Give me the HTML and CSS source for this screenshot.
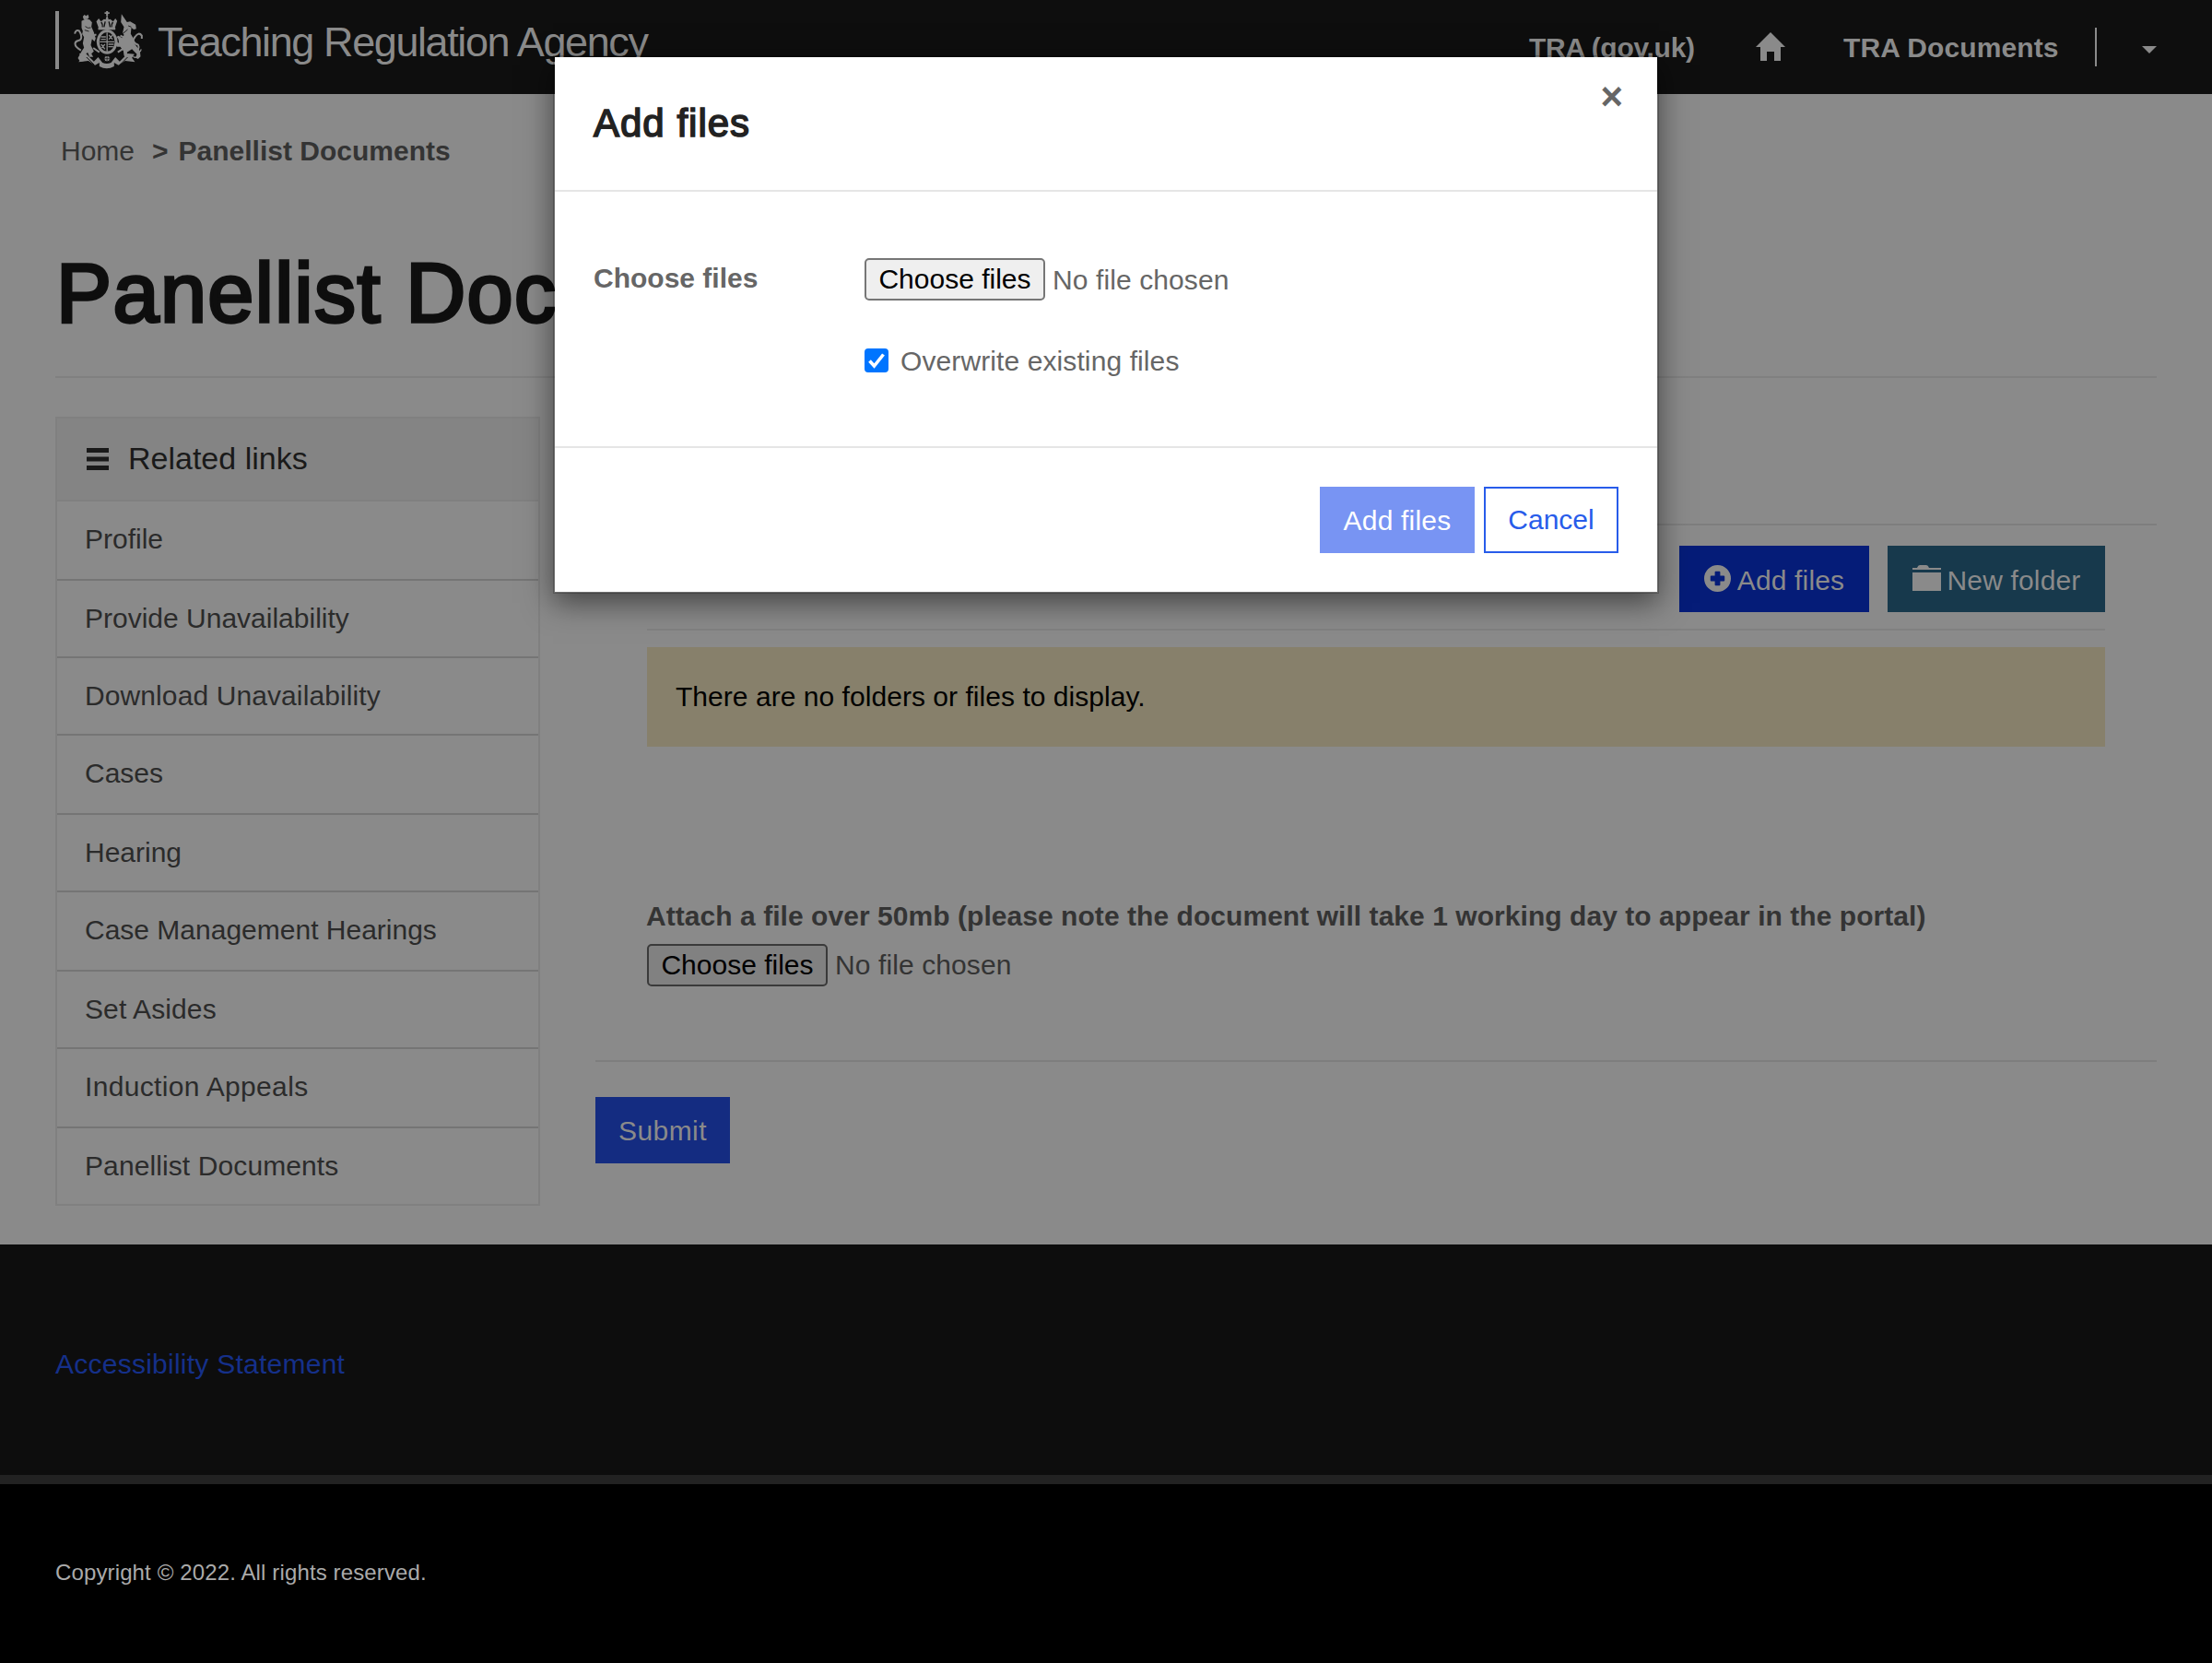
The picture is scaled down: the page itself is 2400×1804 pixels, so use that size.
FILE: index.html
```html
<!DOCTYPE html>
<html lang="en">
<head>
<meta charset="utf-8">
<title>Panellist Documents</title>
<link rel="stylesheet" href="styles.css">
</head>
<body>
<header class="navbar">
  <a class="brand">
    <svg class="crest" viewBox="0 0 230 195" aria-hidden="true">
      <g fill="currentColor">
        <path d="M28 32l12-6 14 2 8 9-2 14 8 18 6 20-4 10-8-8-4 20 10 20-8 8 6 10-12 0-6-14-14 10-4 10 10 6-16 4-8-12 12-22 8-12-4-14 4-20-6-10 2-10-4-10z"/>
        <path d="M32 18l5-6 6 4 6-5 3 9-4 6-13 1z"/>
        <path d="M158 10l18 26 10-2 18 10 2 14-8 2-8-6-2 20 8 14 4 18 18 24 2 18-8 8-8-4 4-12-16-16-16 10 2 14 12 12-14 2-10-18-2-14-10-14-10 0-8-12 4-6 10 6-2-12-6-8 6-4 12 8 6-10-4-8 4-18-10-16z"/>
        <path d="M84 24l7 10 10-8 5 2 5-16 5 16 5-2 10 8 7-10 6 8-8 24H84l-8-22z"/>
        <path d="M108 0h6v4h5v5h-5v7h-6V9h-5V4h5z"/>
        <path d="M82 54h56v7H82z"/>
        <path d="M20 138l22 0 26 26 14-14 14 18q14 6 28 0l14-18 14 14 26-26 22 2-8 12 10 14-32-4-22 14-14-8v12q-24 14-48 0v-12l-14 8-22-14-32 4 12-14z"/>
      </g>
      <g fill="none" stroke="currentColor" stroke-width="6">
        <path d="M26 128C-2 112 6 98 18 96S30 78 20 64Q8 60 6 74"/>
        <path d="M200 130q20-4 12-20-24-10-10-26 12-18 22-4v10"/>
        <path d="M56 84l20-8M66 120l20 14M176 90l-22-10M170 118l-24 16"/>
        <path d="M204 128q16 10 18-4M196 148q10 8 14-4" stroke-width="4"/>
      </g>
      <ellipse cx="111" cy="100" rx="34" ry="40" fill="currentColor"/>
      <ellipse cx="111" cy="100" rx="25" ry="31" fill="#0e0e0e"/>
      <g stroke="currentColor" fill="none" stroke-width="4">
        <path d="M111 70v62M87 100h48M91 84h16M91 92h16M115 108h18M115 116h16M117 78l12 14M129 78l-12 14M92 108l12 16M104 108l-10 12"/>
        <path d="M44 150l24 24M178 150l-24 24" stroke="#0e0e0e" stroke-width="3"/>
        <path d="M92 36q6 8 4 16M130 36q-6 8-4 16M105 34l-4 18M117 34l4 18" stroke="#0e0e0e"/>
        <path d="M40 50q8 8 18 4M38 62l14 4M180 48l10 4M178 60l-14 12" stroke="#0e0e0e" stroke-width="2.5"/>
      </g>
      <circle cx="111" cy="155" r="10" fill="currentColor" stroke="#0e0e0e" stroke-width="3"/>
      <path d="M111 142v26M100 155h22" stroke="#0e0e0e" stroke-width="2"/>
    </svg>
    <span class="brand-name">Teaching Regulation Agency</span>
  </a>
  <nav class="nav">
    <a class="nav-gov">TRA (gov.uk)</a>
    <svg class="home" viewBox="0 0 32 31" aria-hidden="true"><path fill="currentColor" d="M16 0L32 16H27V31H20V21H12V31H5V16H0z"/></svg>
    <a class="nav-docs">TRA Documents</a>
    <span class="nav-divider"></span>
    <svg class="caret" viewBox="0 0 16 8" aria-hidden="true"><path fill="currentColor" d="M0 0H16L8 8z"/></svg>
  </nav>
</header>

<main class="page">
  <div class="breadcrumb"><a>Home</a><b class="sep">&gt;</b><b>Panellist Documents</b></div>
  <h1>Panellist Documents</h1>
  <div class="columns">
    <aside class="related">
      <div class="related-head">
        <svg class="bars" viewBox="0 0 24 24" aria-hidden="true"><path fill="currentColor" d="M0 0h24v5H0zM0 9.500h24v5H0zM0 19h24v5H0z"/></svg>
        <span>Related links</span>
      </div>
      <ul>
        <li>Profile</li>
        <li>Provide Unavailability</li>
        <li class="roomy">Download Unavailability</li>
        <li>Cases</li>
        <li>Hearing</li>
        <li>Case Management Hearings</li>
        <li class="roomy">Set Asides</li>
        <li class="roomier">Induction Appeals</li>
        <li class="roomy">Panellist Documents</li>
      </ul>
    </aside>
    <section class="content">
      <div class="documents">
        <div class="toolbar">
          <button class="btn btn-add"><svg viewBox="0 0 30 30" width="29" height="29" aria-hidden="true"><path fill="currentColor" fill-rule="evenodd" d="M15 0a15 15 0 1 0 0 30a15 15 0 1 0 0-30zM13 7h4q1 0 1 1v4h4q1 0 1 1v4q0 1-1 1h-4v4q0 1-1 1h-4q-1 0-1-1v-4H8q-1 0-1-1v-4q0-1 1-1h4V8q0-1 1-1z"/></svg>Add files</button>
          <button class="btn btn-folder"><svg viewBox="0 0 31 28" width="31" height="28" aria-hidden="true"><path fill="currentColor" d="M0 5V3H5Q6 0 8 0H15Q17 0 18 3H31V5zM0 8H31V28H0z"/></svg>New folder</button>
        </div>
        <div class="alert">There are no folders or files to display.</div>
        <div class="attach">
          <b>Attach a file over 50mb (please note the document will take 1 working day to appear in the portal)</b>
          <div class="file"><span class="file-btn">Choose files</span><span>No file chosen</span></div>
        </div>
      </div>
      <div class="actions"><button class="btn btn-submit">Submit</button></div>
    </section>
  </div>
</main>

<footer>
  <div class="footer-top"><a>Accessibility Statement</a></div>
  <div class="footer-bottom">Copyright © 2022. All rights reserved.</div>
</footer>

<div class="modal" role="dialog">
  <div class="modal-head"><h2>Add files</h2><span class="close">×</span></div>
  <div class="modal-body">
    <b class="field-label">Choose files</b>
    <div class="field">
      <div class="file"><span class="file-btn">Choose files</span><span>No file chosen</span></div>
      <div class="check">
        <svg viewBox="0 0 26 26" width="26" height="26" aria-hidden="true"><rect width="26" height="26" rx="4" fill="#0075ff"/><path d="M5.500 13.500l5 5.500L20.500 6.500" fill="none" stroke="#fff" stroke-width="3.600"/></svg>
        <span>Overwrite existing files</span>
      </div>
    </div>
  </div>
  <div class="modal-foot"><button class="btn btn-primary">Add files</button><button class="btn btn-cancel">Cancel</button></div>
</div>
</body>
</html>
```
FILE: styles.css
```css
* { box-sizing: border-box; }
body {
  margin: 0;
  width: 2400px;
  height: 1804px;
  overflow: hidden;
  position: relative;
  background: #8a8a8a;
  color: #343434;
  font: 30px/42px "Liberation Sans", Arial, sans-serif;
}
ul { list-style: none; margin: 0; padding: 0; }

.navbar {
  height: 102px;
  background: #0e0e0e;
  color: #8a8a8a;
  display: flex;
  justify-content: space-between;
  padding: 12px 60px 0;
}
.brand { display: flex; height: 63px; border-left: 4px solid #8a8a8a; padding-left: 15px; }
.crest { width: 77px; height: 65px; flex: none; }
.brand-name { font-size: 45px; line-height: 68px; letter-spacing: -1.4px; margin-left: 15px; white-space: nowrap; }
.nav { display: flex; align-items: flex-start; font-weight: bold; white-space: nowrap; }
.nav a { margin-top: 19px; }
.nav-gov { width: 246px; letter-spacing: -.3px; }
.home { width: 32px; height: 31px; margin: 23px 63px 0 0; }
.nav-docs { width: 273px; letter-spacing: .1px; }
.nav-divider { width: 2px; height: 42px; margin-top: 18px; background: #8a8a8a; }
.caret { width: 16px; height: 8px; margin: 38px 0 0 49px; }

.page { height: 1248px; padding: 41px 60px 0; }
.breadcrumb { padding-left: 6px; display: flex; white-space: pre; }
.sep { margin: 0 11px 0 19px; }
h1 {
  margin: 0 0 42px;
  padding: 79px 0 0 1px;
  height: 225px;
  border-bottom: 2px solid #808080;
  color: #0e0e0e;
  font-size: 90px;
  line-height: 108px;
  font-weight: normal;
  letter-spacing: 1.4px;
  -webkit-text-stroke: 3.4px #0e0e0e;
}
.columns { display: flex; gap: 60px; }
.related { width: 526px; height: 856px; border: 2px solid #808080; }
.related-head {
  height: 90px;
  display: flex;
  align-items: center;
  gap: 21px;
  padding: 0 0 2px 32px;
  background: #848484;
  border-bottom: 2px solid #808080;
  color: #1a1a1a;
  font-size: 34px;
}
.bars { width: 24px; height: 24px; margin-top: 2px; }
.related ul { display: grid; grid-template-rows: 86px 84px 84px 86px 84px 86px 84px 86px 82px; }
.related li { padding: 20px 0 0 30px; border-bottom: 2px solid #757575; color: #2b2b2b; }
.related li:last-child { border-bottom: 0; }
.related .roomy { letter-spacing: .1px; }
.related .roomier { letter-spacing: .33px; }

.content { width: 1694px; padding-top: 116px; }
.documents { height: 584px; padding: 22px 56px 0; border: solid #7e7e7e; border-width: 2px 0; }
.toolbar { display: flex; justify-content: flex-end; gap: 20px; height: 92px; border-bottom: 2px solid #808080; }
.btn {
  height: 72px;
  border: 0;
  padding: 2px 0 0;
  display: flex;
  align-items: center;
  justify-content: center;
  font: 30px/42px "Liberation Sans", Arial, sans-serif;
  color: #8a8a8a;
  white-space: nowrap;
}
.btn svg { margin: -5px 7px 0 0; }
.toolbar .btn { letter-spacing: .15px; padding-top: 3px; }
.btn-add { width: 206px; background: #051c78; }
.btn-folder { width: 236px; background: #17394c; }
.alert { margin-top: 18px; height: 108px; padding: 33px 31px 0; background: #87806b; color: #000; letter-spacing: .04px; }
.attach { padding-top: 163px; }
.attach b { display: block; white-space: nowrap; margin-left: -1px; letter-spacing: .05px; }
.attach .file { margin-top: 9px; }
.file { display: flex; align-items: center; gap: 8px; height: 46px; white-space: nowrap; letter-spacing: .1px; }
.file-btn {
  width: 196px;
  height: 46px;
  border: 2px solid #3a3a3a;
  border-radius: 5px;
  background: #818181;
  color: #000;
  text-align: center;
  letter-spacing: 0;
}
.actions { padding-top: 38px; }
.btn-submit { width: 146px; padding: 1px 0 0; background: #142c81; letter-spacing: .4px; }

.footer-top { height: 260px; padding: 109px 60px 0; background: #0d0d0d; border-bottom: 10px solid #222; color: #15308a; letter-spacing: .25px; }
.footer-bottom { height: 194px; padding: 75px 60px 0; background: #000; color: #aaa; font-size: 24px; letter-spacing: .13px; }

.modal {
  position: absolute;
  left: 600px;
  top: 60px;
  width: 1200px;
  height: 584px;
  border: 2px solid rgba(0, 0, 0, .2);
  background: #fff;
  background-clip: padding-box;
  box-shadow: 0 10px 30px rgba(0, 0, 0, .5);
  color: #666;
}
.modal-head { height: 146px; padding: 0 37px 0 42px; display: flex; justify-content: space-between; border-bottom: 2px solid #e5e5e5; }
.modal-head h2 {
  margin: 47px 0 0;
  color: #222;
  font-size: 42px;
  line-height: 50px;
  font-weight: normal;
  letter-spacing: 1px;
  -webkit-text-stroke: 1.6px #222;
}
.close { font-size: 42px; line-height: 42px; font-weight: bold; margin-top: 22px; }
.modal-body { height: 278px; display: flex; padding: 72px 42px 0; border-bottom: 2px solid #e5e5e5; }
.field-label { width: 294px; padding-top: 1px; }
.modal .file { padding-top: 1px; }
.modal .file-btn { border-color: #767676; background: #efefef; margin-top: -1px; }
.check { display: flex; align-items: center; gap: 13px; margin-top: 44px; letter-spacing: .1px; }
.check span { position: relative; top: 1px; }
.modal-foot { display: flex; justify-content: flex-end; gap: 10px; padding: 42px 42px 0; }
.btn-primary { width: 168px; padding: 1px 0 0; background: #7894f3; color: #fff; letter-spacing: .2px; }
.btn-cancel { width: 146px; padding: 0; background: #fff; border: 2px solid #285cea; color: #285cea; }
```
